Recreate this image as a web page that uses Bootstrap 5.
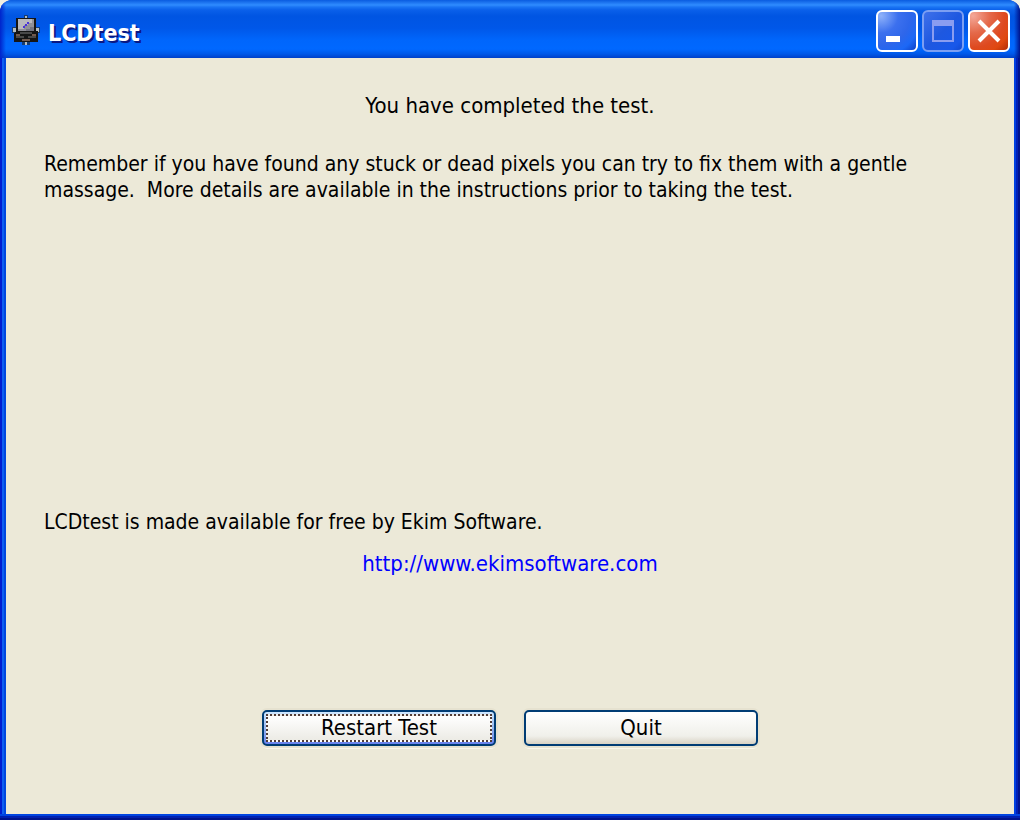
<!DOCTYPE html>
<html lang="en">
<head>
<meta charset="utf-8">
<meta name="viewport" content="width=device-width, initial-scale=1">
<title>LCDtest</title>
<link href="https://cdn.jsdelivr.net/npm/bootstrap@5.3.0/dist/css/bootstrap.min.css" rel="stylesheet">
<style>
  body { font-family: "DejaVu Sans Condensed", "DejaVu Sans", sans-serif; font-size: 21px; line-height: 26px; color: #000; background: #f1efe2; }
  .window { background: linear-gradient(90deg, #001dd0 0 2px, #0f5ff0 2px 4px, #0048e0 4px 6px, #0048e0 6px calc(100% - 6px), #0040e0 calc(100% - 6px) calc(100% - 4px), #0020b8 calc(100% - 4px) calc(100% - 2px), #00138c calc(100% - 2px)); border-radius: 12px 12px 0 0; overflow: hidden; }
  .title-bar { height: 58px; padding: 4px 10px 0 12px; background: linear-gradient(90deg, #0024cc 0, #0024cc00 6px calc(100% - 6px), #00138c 100%), linear-gradient(#0a5ce0 0, #2f8cff 5px, #1a74f4 7px, #0a60ea 10px, #0055e2 16px, #0057e8 28px, #0066fc 40px, #0068ff 49px, #0058e8 54px, #0040c8 58px); }
  .title-text { font-size: 23px; line-height: 28px; padding-top: 4px; font-weight: 700; color: #fff; text-shadow: 2px 2px 0 #0a1883; }
  .win-btn { width: 42px; height: 42px; padding: 0; border: 2px solid #fff; border-radius: 6px; }
  .win-btn svg { display: block; }
  .win-min { background: radial-gradient(circle at 8% 10%, #8fb2fa 0, #3c70ee 35%, #2e66ea 60%, #1c68f6 80%, #0c40c8 100%); }
  .win-max, .win-max:disabled { opacity: 1; border-color: #7c9ff2; background: linear-gradient(135deg, #3f70ea, #1e58e0 50%, #1858ea 85%, #1248d0); }
  .win-close { background: radial-gradient(circle at 8% 10%, #f4a898 0, #e4694a 35%, #de4a20 65%, #e04810 80%, #b02c08 100%); }
  .client { margin: 0 6px; padding: 35px 38px 68px; background: #ece9d8; }
  .frame-foot { height: 6px; background: linear-gradient(#0044e0 0 2px, #0020b0 2px 4px, #00138c 4px); }
  .note { min-height: 382px; padding-top: 32px; }
  .caption-text, .push-btn { font-size: 22px; }
  .site-link { color: #00f; text-decoration: none; }
  .push-btn { width: 234px; height: 36px; padding: 0; border: 2px solid #003c74; border-radius: 5px; color: #000; background: linear-gradient(#fff, #f0f0ea 75%, #d8d2c4); box-shadow: 0 0 0 2px #e6e2d0, 0 3px 0 #f8f6ec; }
  .push-btn.is-default { padding: 2px; background: linear-gradient(#cee7ff, #94b4ee 50%, #6982ee); }
  .focus-frame { height: 28px; line-height: 24px; border: 2px dotted #503c38; background: linear-gradient(#fff, #ecebe5); }
</style>
</head>
<body>
<main class="window d-flex flex-column min-vh-100">
  <header class="title-bar d-flex align-items-center">
    <svg width="28" height="32" viewBox="0 0 28 32" shape-rendering="crispEdges" aria-hidden="true">
      <path fill="#163c72" d="M12 0h4v3h-4zM0 12h4v6H0zM24 12h4v6h-4zM10 26h8v4h-8z"/>
      <path fill="#b4bcc0" d="M13 1h2v2h-2zM1 13h3v4H1zM24 13h3v4h-3zM13 27h2v3h-2z"/>
      <path fill="#151515" d="M4 3h20v13h2v11H2V18l2-2z"/>
      <path fill="#909098" d="M6 4h16v12H6z"/>
      <path fill="#b8b8bd" d="M6 4h14v4h-4v2h-4v4H6z"/>
      <path fill="#747480" d="M18 12h4v4h-8v-2h4z"/>
      <path fill="#4932d8" d="M15 7h2v2h-2v2h-2v2h-2v-2h2V9h2z"/>
      <path fill="#484848" d="M8 17h12v2H8zM4 21h8v2H4zM16 21h8v2h-8z"/>
      <path fill="#71594d" d="M4 19h4v2H4zM20 19h4v2h-4zM10 24h8v2h-8z"/>
    </svg>
    <h1 class="title-text mb-0 ms-2 me-auto">LCDtest</h1>
    <div class="d-flex gap-1">
      <button type="button" class="win-btn win-min" aria-label="Minimize">
        <svg width="38" height="38" viewBox="0 0 38 38"><path fill="#fff" d="M8 24h14v6H8z"/></svg>
      </button>
      <button type="button" class="win-btn win-max" aria-label="Maximize" disabled>
        <svg width="38" height="38" viewBox="0 0 38 38"><path fill="#8a9df0" fill-rule="evenodd" d="M8 8h22v22H8zM10 14v14h18V14z"/></svg>
      </button>
      <button type="button" class="win-btn win-close" aria-label="Close">
        <svg width="38" height="38" viewBox="0 0 38 38"><path stroke="#fff" stroke-width="4" d="M9 9l20 20M29 9L9 29"/></svg>
      </button>
    </div>
  </header>
  <section class="client flex-grow-1 d-flex flex-column">
    <p class="caption-text text-center mb-0">You have completed the test.</p>
    <p class="note mb-0">Remember if you have found any stuck or dead pixels you can try to fix them with a gentle<br>massage.&nbsp; More details are available in the instructions prior to taking the test.</p>
    <p class="mt-2 mb-3">LCDtest is made available for free by Ekim Software.</p>
    <p class="caption-text text-center mb-0"><a class="site-link" href="http://www.ekimsoftware.com">http://www.ekimsoftware.com</a></p>
    <div class="d-flex justify-content-center mt-auto">
      <button type="button" class="push-btn is-default me-4"><span class="focus-frame d-block">Restart Test</span></button>
      <button type="button" class="push-btn ms-1">Quit</button>
    </div>
  </section>
  <div class="frame-foot"></div>
</main>
<script src="https://cdn.jsdelivr.net/npm/bootstrap@5.3.0/dist/js/bootstrap.bundle.min.js"></script>
</body>
</html>
